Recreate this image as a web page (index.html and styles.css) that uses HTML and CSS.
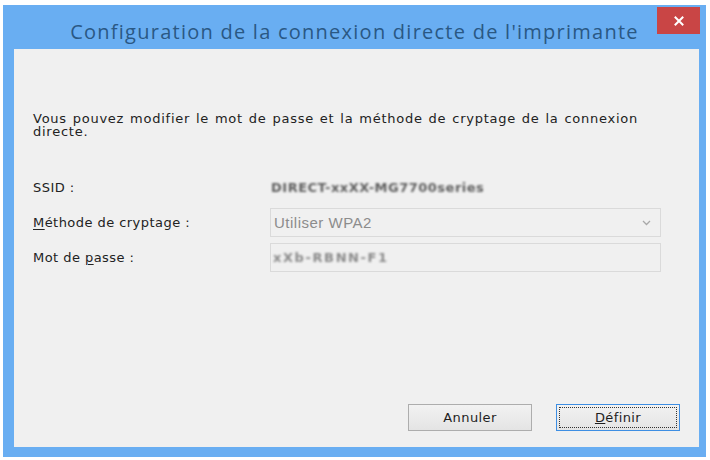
FILE: index.html
```html
<!DOCTYPE html>
<html lang="fr">
<head>
<meta charset="utf-8">
<title>Configuration de la connexion directe de l'imprimante</title>
<link rel="stylesheet" href="styles.css">
</head>
<body>
<div class="window">
  <div class="titlebar">
    <span class="spacer"></span>
    <span class="title">Configuration de la connexion directe de l'imprimante</span>
    <span class="tb-right">
      <span class="close" aria-label="Fermer">
        <svg width="10" height="10" viewBox="0 0 10 10"><path d="M1.5 1.5 L8.5 8.5 M8.5 1.5 L1.5 8.5" stroke="#fff" stroke-width="2" stroke-linecap="square"/></svg>
      </span>
    </span>
  </div>
  <div class="client">
    <p class="intro">Vous pouvez modifier le mot de passe et la méthode de cryptage de la connexion directe.</p>
    <div class="form">
      <div class="row">
        <span class="label">SSID :</span>
        <span class="value blurred">DIRECT-xxXX-MG7700series</span>
      </div>
      <div class="row">
        <span class="label"><u>M</u>éthode de cryptage :</span>
        <span class="field combo">
          <span class="combo-text">Utiliser WPA2</span>
          <svg class="chev" width="9" height="6" viewBox="0 0 9 6"><path d="M1 1 L4.5 4.5 L8 1" fill="none" stroke="#a8a8a8" stroke-width="1.3"/></svg>
        </span>
      </div>
      <div class="row">
        <span class="label">Mot de <u>p</u>asse :</span>
        <span class="field textbox"><span class="pw blurred">xXb-RBNN-F1</span></span>
      </div>
    </div>
    <div class="buttons">
      <span class="btn">Annuler</span>
      <span class="btn default"><span class="focus"><u>D</u>éfinir</span></span>
    </div>
  </div>
</div>
</body>
</html>
```
FILE: styles.css
```css
html, body {
  margin: 0;
  padding: 0;
  background: #ffffff;
}
body {
  padding: 5px 4px 3px 3px;
  width: 710px;
  height: 460px;
  box-sizing: border-box;
}
.window {
  background: #69aef2;
  height: 452px;
  display: flex;
  flex-direction: column;
}
.titlebar {
  height: 44px;
  display: grid;
  grid-template-columns: 1fr auto 1fr;
  align-items: start;
}
.title {
  font-family: "Open Sans", "Noto Sans", sans-serif;
  font-size: 20px;
  color: #2a5884;
  line-height: 20px;
  padding-top: 17px;
  white-space: nowrap;
  letter-spacing: 1.25px;
}
.tb-right {
  display: flex;
  justify-content: flex-end;
  padding: 2px 6px 0 0;
}
.close {
  width: 43px;
  height: 27px;
  background: #c94545;
  display: flex;
  align-items: center;
  justify-content: center;
}
.client {
  flex: 1;
  margin: 0 7px 10px 11px;
  background: #f0f0f0;
  display: flex;
  flex-direction: column;
  padding: 0 19px 16px 19px;
  font-family: "DejaVu Sans", Verdana, sans-serif;
  font-size: 13px;
  color: #222222;
}
.intro {
  margin: 63px 0 0 0;
  line-height: 13px;
  width: 620px;
  letter-spacing: 0.75px;
  word-spacing: 1px;
}
.form {
  margin-top: 35px;
  display: flex;
  flex-direction: column;
  gap: 6px;
}
.row {
  display: flex;
  align-items: center;
  height: 29px;
}
.label {
  width: 237px;
  letter-spacing: 0.45px;
}
.label u {
  text-decoration-thickness: 1px;
  text-underline-offset: 2px;
}
.value {
  color: #5e5e5e;
  font-weight: bold;
  letter-spacing: 0.5px;
  padding-left: 1px;
}
.blurred {
  filter: blur(1.3px);
}
.field {
  box-sizing: border-box;
  width: 391px;
  height: 29px;
  border: 1px solid #dadada;
  background: #f0f0f0;
  display: flex;
  align-items: center;
}
.combo {
  justify-content: space-between;
  padding: 0 9px 0 3px;
}
.combo-text {
  color: #8c8c8c;
  font-family: "Liberation Sans", Arial, sans-serif;
  font-size: 15px;
  letter-spacing: 0.5px;
}
.textbox {
  padding-left: 2px;
}
.pw {
  color: #8a8a8a;
  font-weight: bold;
  letter-spacing: 1.6px;
}
.buttons {
  margin-top: auto;
  display: flex;
  justify-content: flex-end;
  gap: 24px;
}
.btn {
  box-sizing: border-box;
  width: 124px;
  height: 27px;
  border: 1px solid #adadad;
  background: linear-gradient(#f2f2f2, #e4e4e4);
  display: flex;
  align-items: center;
  justify-content: center;
  font-size: 13px;
  color: #1e1e1e;
  letter-spacing: 0.4px;
}
.btn.default {
  border-color: #3d8ee3;
  padding: 2px;
}
.focus {
  flex: 1;
  align-self: stretch;
  border: 1px dotted #333;
  display: flex;
  align-items: center;
  justify-content: center;
}
```
